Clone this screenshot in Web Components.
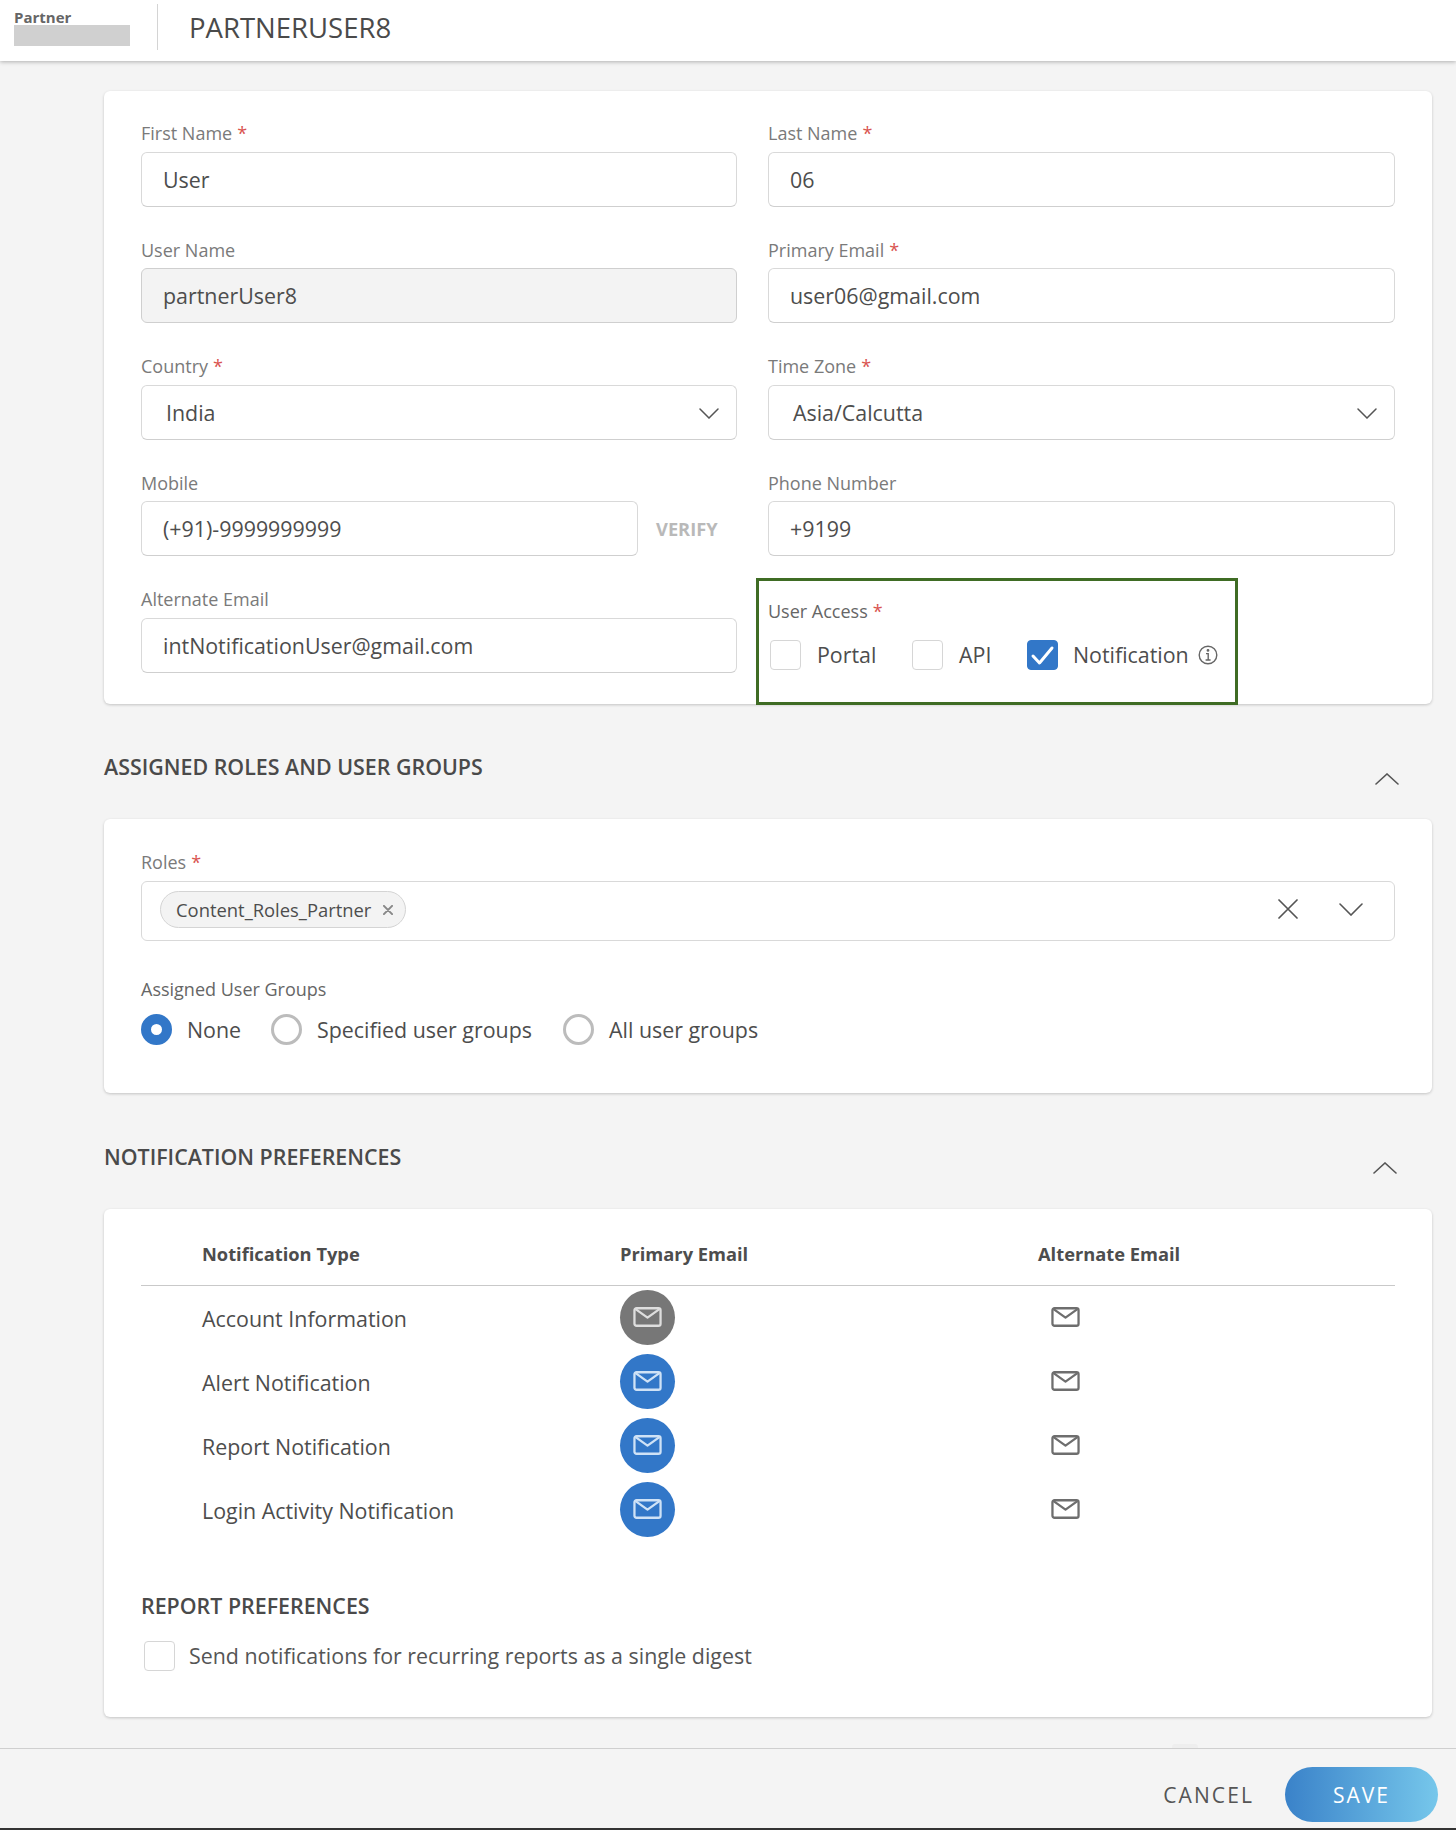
<!DOCTYPE html>
<html lang="en"><head><meta charset="utf-8"><title>Partner user</title>
<style>
html,body{margin:0;padding:0;background:#f4f4f4}
body{width:1456px;height:1830px;overflow:hidden;font-family:"Open Sans",sans-serif;color:#4d4d4d}
</style></head><body>
<app-shell>
  <app-header slot="header" title-text="PARTNERUSER8"></app-header>

  <form-card style="height:613px">
    <field-grid>
      <form-field label="First Name" required><text-box value="User"></text-box></form-field>
      <form-field label="Last Name" required><text-box value="06"></text-box></form-field>
      <form-field label="User Name"><text-box value="partnerUser8" disabled></text-box></form-field>
      <form-field label="Primary Email" required><text-box value="user06@gmail.com"></text-box></form-field>
      <form-field label="Country" required><select-box value="India"></select-box></form-field>
      <form-field label="Time Zone" required><select-box value="Asia/Calcutta"></select-box></form-field>
      <form-field label="Mobile"><verify-box value="(+91)-9999999999"></verify-box></form-field>
      <form-field label="Phone Number"><text-box value="+9199"></text-box></form-field>
      <form-field label="Alternate Email"><text-box value="intNotificationUser@gmail.com"></text-box></form-field>
      <user-access></user-access>
    </field-grid>
  </form-card>

  <section-head text="ASSIGNED ROLES AND USER GROUPS" end="33" height="115" top="49"></section-head>

  <form-card style="height:274px">
    <roles-panel></roles-panel>
  </form-card>

  <section-head text="NOTIFICATION PREFERENCES" end="35" height="116" top="50"></section-head>

  <form-card style="height:508px">
    <notif-table>
      <notif-row label="Account Information" tone="grey"></notif-row>
      <notif-row label="Alert Notification"></notif-row>
      <notif-row label="Report Notification"></notif-row>
      <notif-row label="Login Activity Notification"></notif-row>
    </notif-table>
    <report-prefs></report-prefs>
  </form-card>

  <app-footer slot="footer"></app-footer>
</app-shell>

<script>
const CHEV_DOWN='<svg width="20" height="11" viewBox="0 0 20 11" fill="none" stroke="#555" stroke-width="1.5" stroke-linecap="round"><path d="M1 1l9 9 9-9"/></svg>';
const MAIL=(c,w=30,h=21)=>`<svg width="${w}" height="${h}" viewBox="0 0 30 21" fill="none" stroke="${c}" stroke-width="2.4" stroke-linejoin="round"><rect x="1.3" y="1.3" width="27.4" height="18.4" rx="2.2"/><path d="M2.5 2.2L15 11.2 27.5 2.2"/></svg>`;
const CHECK='<svg width="31" height="30" viewBox="0 0 31 30" fill="none" stroke="#fff" stroke-width="3" stroke-linecap="round" stroke-linejoin="round"><path d="M6 16l6.5 7L25 8"/></svg>';

class Base extends HTMLElement{
  constructor(){super();this.attachShadow({mode:'open'})}
  connectedCallback(){this.shadowRoot.innerHTML=`<style>${this.css()}</style>${this.html()}`}
  attr(n,d=''){return this.hasAttribute(n)?this.getAttribute(n):d}
  css(){return ':host{display:block}'}
  html(){return '<slot></slot>'}
}
customElements.define('app-shell',class extends Base{
  css(){return `:host{display:flex;flex-direction:column;width:1456px;height:1830px}
  main{height:1687px;padding:30px 24px 0 104px;box-sizing:border-box;display:flex;flex-direction:column}
  ::slotted(*){flex:none}`}
  html(){return `<slot name="header"></slot><main><slot></slot></main><slot name="footer"></slot>`}
});
customElements.define('app-header',class extends Base{
  css(){return `:host{display:flex;align-items:center;height:61px;background:#fff;box-shadow:0 1px 4px rgba(0,0,0,.28);position:relative;box-sizing:border-box}
  .logo{width:116px;margin-left:14px;height:48px;display:flex;flex-direction:column;margin-top:-3px}
  .logo b{font-size:15px;line-height:18px;color:#666;font-weight:700;margin-top:2.5px}
  .logo i{display:block;height:21px;background:#d0d0d0;margin-top:-.5px}
  .sep{width:1px;height:46px;background:#d4d4d4;margin:-8px 31px 0 27px}
  h1{margin:-6px 0 0;font-size:27.5px;font-weight:400;color:#4a4a4a;line-height:34px}`}
  html(){return `<div class="logo"><b>Partner</b><i></i></div><div class="sep"></div><h1>${this.attr('title-text')}</h1>`}
});
customElements.define('form-card',class extends Base{
  css(){return `:host{display:block;background:#fff;border-radius:6px;box-shadow:0 1px 3px rgba(0,0,0,.2);box-sizing:border-box}`}
});
customElements.define('field-grid',class extends Base{
  css(){return `:host{display:grid;grid-template-columns:596px 627px;column-gap:31px;grid-auto-rows:116.6px;padding:31px 37px 0}`}
});
customElements.define('form-field',class extends Base{
  css(){return `:host{display:block}
  label{display:block;height:29.5px;line-height:22px;font-size:18px;color:#7a7a7a}
  em{font-style:normal;color:#d9534f;margin-left:5px}`}
  html(){return `<label>${this.attr('label')}${this.hasAttribute('required')?'<em>*</em>':''}</label><slot></slot>`}
});
const boxCss=`box-sizing:border-box;height:55px;border:1.5px solid #d9d9d9;border-bottom-color:#cfcfcf;border-radius:6px;font-size:21.4px;color:#4d4d4d;display:flex;align-items:center;background:#fff`;
customElements.define('text-box',class extends Base{
  css(){return `:host{display:block}.b{${boxCss};padding-left:21px}.b.d{background:#f3f3f3;border-color:#cfcfcf}`}
  html(){return `<div class="b ${this.hasAttribute('disabled')?'d':''}">${this.attr('value')}</div>`}
});
customElements.define('select-box',class extends Base{
  css(){return `:host{display:block}.b{${boxCss};padding:0 17px 0 24px;justify-content:space-between}svg{display:block;margin-top:3px}`}
  html(){return `<div class="b"><span>${this.attr('value')}</span>${CHEV_DOWN}</div>`}
});
customElements.define('verify-box',class extends Base{
  css(){return `:host{display:flex;align-items:center}.b{${boxCss};padding-left:21px;width:497px}
  span{margin-left:18px;font-size:18.3px;font-weight:700;color:#b9b9b9}`}
  html(){return `<div class="b">${this.attr('value')}</div><span>VERIFY</span>`}
});
customElements.define('check-box',class extends Base{
  css(){return `:host{display:block;flex:none;width:31px;height:30px;box-sizing:border-box;border:1.5px solid #d6d6d6;border-radius:4px;background:#fff}
  :host([checked]){background:#3277c8;border-color:#3277c8}
  svg{display:block;margin:-1.5px}`}
  html(){return this.hasAttribute('checked')?CHECK:''}
});
customElements.define('radio-dot',class extends Base{
  css(){return `:host{display:block;flex:none;width:31px;height:31px;box-sizing:border-box;border-radius:50%;border:3px solid #bcbcbc;background:#fff}
  :host([checked]){border:10px solid #3277c8}`}
  html(){return ''}
});
customElements.define('user-access',class extends Base{
  css(){return `:host{display:block;box-sizing:border-box;margin:-10px 0 0 -12px;width:482px;height:127px;border:3px solid #3f6c24;padding:0 0 0 9px;background:#fff}
  label{display:block;height:22px;line-height:22px;font-size:18px;color:#666;margin-top:19px}
  em{font-style:normal;color:#d9534f;margin-left:5px}
  .row{display:flex;align-items:center;margin-top:18px;font-size:21.4px;color:#4d4d4d;margin-left:2px}
  .t{margin-left:16px;margin-top:-2px}
  svg{margin-left:9px;display:block}`}
  html(){return `<label>User Access<em>*</em></label>
  <div class="row">
   <check-box></check-box><span class="t" style="width:95px">Portal</span>
   <check-box></check-box><span class="t" style="width:68px">API</span>
   <check-box checked></check-box><span class="t" style="margin-left:15px">Notification</span>
   <svg width="20" height="20" viewBox="0 0 20 20" fill="none" stroke="#666" stroke-width="1.4"><circle cx="10" cy="10" r="8.8"/><path d="M8 8.6h2.2V15M7.6 15h5"/><circle cx="10" cy="5.4" r=".7" fill="#666"/></svg>
  </div>`}
});
customElements.define('section-head',class extends Base{
  css(){return `:host{display:flex;justify-content:space-between;align-items:flex-start;height:${this.attr('height')}px;box-sizing:border-box;padding-right:${this.attr('end')}px}
  h2{margin:${this.attr('top')}px 0 0;font-size:21.4px;line-height:27px;font-weight:600;color:#4a4a4a}
  svg{display:block;margin-top:69px}`}
  html(){return `<h2>${this.attr('text')}</h2><svg width="24" height="12" viewBox="0 0 24 12" fill="none" stroke="#555" stroke-width="1.6" stroke-linecap="round"><path d="M1 11L12 1l11 10"/></svg>`}
});
customElements.define('roles-panel',class extends Base{
  css(){return `:host{display:block;padding:32px 37px 0}
  label{display:block;height:22px;line-height:22px;font-size:18px;color:#7a7a7a}
  em{font-style:normal;color:#d9534f;margin-left:5px}
  .b{box-sizing:border-box;height:60px;margin-top:8px;border:1.5px solid #d9d9d9;border-radius:6px;display:flex;align-items:center;padding-left:18px}
  .chip{box-sizing:border-box;height:37px;width:246px;margin-top:-3px;border:1.5px solid #d4d4d4;border-radius:19px;background:#f3f3f3;display:flex;align-items:center;padding-left:15px;font-size:18.4px;color:#4d4d4d;white-space:nowrap}
  .chip svg{margin-left:auto;margin-right:12px}
  .ic{margin-left:auto;display:flex;align-items:center;gap:41px;margin:-4px 31px 0 auto}
  .g{margin-top:37px;color:#666}
  .radios{display:flex;align-items:center;margin-top:14px;font-size:21.4px;color:#4d4d4d}
  .radios span{margin-left:15px}
  svg{display:block}`}
  html(){return `<label>Roles<em>*</em></label>
  <div class="b"><div class="chip">Content_Roles_Partner<svg width="10" height="10" viewBox="0 0 11 11" stroke="#888" stroke-width="2.2" stroke-linecap="round"><path d="M1 1l9 9M10 1l-9 9"/></svg></div>
    <div class="ic"><svg width="20" height="20" viewBox="0 0 20 20" stroke="#555" stroke-width="1.7" stroke-linecap="round"><path d="M1 1l18 18M19 1L1 19"/></svg>
    <svg width="24" height="13" viewBox="0 0 24 13" fill="none" stroke="#555" stroke-width="1.6" stroke-linecap="round"><path d="M1 1l11 11L23 1"/></svg></div></div>
  <label class="g">Assigned User Groups</label>
  <div class="radios"><radio-dot checked></radio-dot><span style="width:84px">None</span>
  <radio-dot></radio-dot><span style="width:246px">Specified user groups</span>
  <radio-dot></radio-dot><span>All user groups</span></div>`}
});
customElements.define('notif-table',class extends Base{
  css(){return `:host{display:block;margin:0 37px}
  .h{display:grid;grid-template-columns:61px 418px 418px 1fr;height:77px;box-sizing:border-box;border-bottom:1.5px solid #c9c9c9;padding-top:33px;font-size:18.3px;font-weight:700;color:#4d4d4d;line-height:24px}
  .rows{margin-top:-1px}
  ::slotted(*){display:block}`}
  html(){return `<div class="h"><span></span><span>Notification Type</span><span>Primary Email</span><span>Alternate Email</span></div><div class="rows"><slot></slot></div>`}
});
customElements.define('notif-row',class extends Base{
  css(){return `:host{display:grid!important;grid-template-columns:61px 418px 431px 1fr;height:64px;align-items:center;font-size:21.4px;color:#4d4d4d}
  .l{padding-top:3px}
  .c{width:55px;height:55px;border-radius:50%;background:${this.attr('tone')==='grey'?'#777':'#3277c8'};display:flex;align-items:center;justify-content:center}
  svg{display:block}`}
  html(){return `<span></span><span class="l">${this.attr('label')}</span><div class="c">${MAIL(this.attr('tone')==='grey'?'#dedede':'#cfe2f6',29,20)}</div><div>${MAIL('#6e6e6e',29,20)}</div>`}
});
customElements.define('report-prefs',class extends Base{
  css(){return `:host{display:block;padding:51px 37px 0}
  h3{margin:0;font-size:21.4px;line-height:27px;font-weight:600;color:#4a4a4a}
  .r{display:flex;align-items:center;margin:22px 0 0 3px;font-size:21.4px;color:#555}
  span{margin-left:14px;margin-top:-1px}`}
  html(){return `<h3>REPORT PREFERENCES</h3><div class="r"><check-box></check-box><span>Send notifications for recurring reports as a single digest</span></div>`}
});
customElements.define('app-footer',class extends Base{
  css(){return `:host{display:flex;align-items:flex-start;justify-content:flex-end;height:82px;box-sizing:border-box;border-top:1.5px solid #cfcfcf;border-bottom:2px solid #333;padding:17.5px 18px 0 0;background:#f4f4f4;position:relative}
  .tab{position:absolute;left:1172px;top:-5px;width:26px;height:4px;background:#eeeeee;border-radius:3px 3px 0 0}
  .c{font-size:21px;letter-spacing:2.1px;color:#555;margin:1px 31px 0 0;line-height:55px}
  .s{width:153px;height:55px;border-radius:28px;background:linear-gradient(90deg,#3a82c9,#76c7eb);color:#fff;font-size:21px;letter-spacing:2px;display:flex;align-items:center;justify-content:center}
  .s b{font-weight:400;margin-top:2px}`}
  html(){return `<i class="tab"></i><span class="c">CANCEL</span><span class="s"><b>SAVE</b></span>`}
});
</script>
</body></html>
